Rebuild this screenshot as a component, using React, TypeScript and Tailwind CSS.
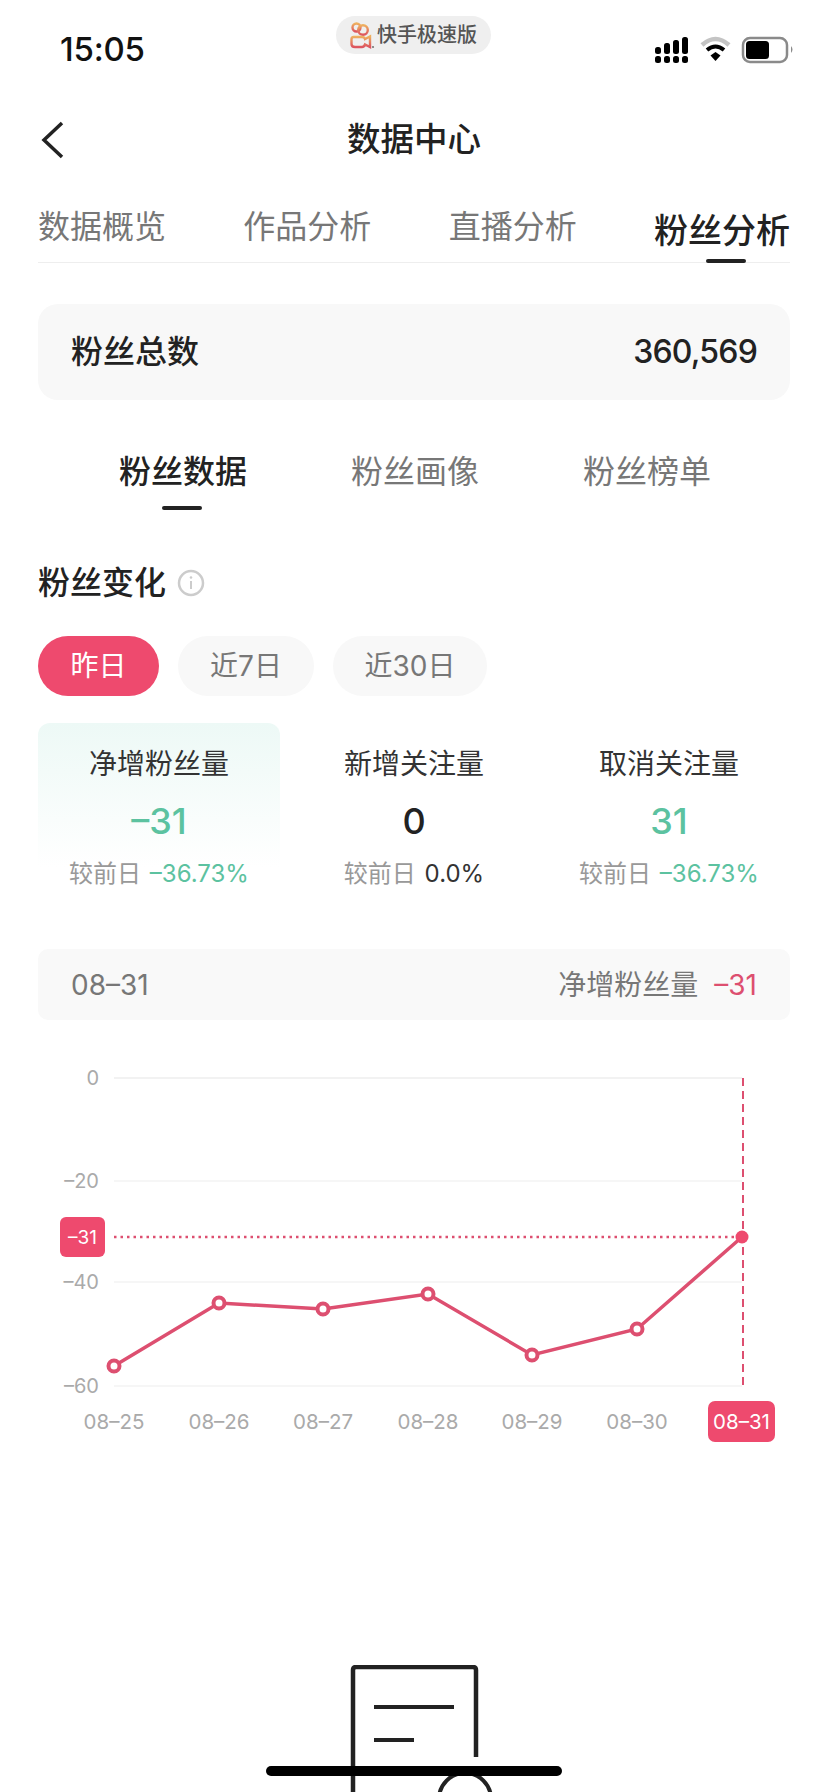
import React from 'react';

const fontStack = 'font-["Inter","Noto_Sans_CJK_SC",sans-serif]';

const points = [
  { x: 114, y: 1365, label: '08–25' },
  { x: 219, y: 1302, label: '08–26' },
  { x: 323, y: 1308, label: '08–27' },
  { x: 428, y: 1293, label: '08–28' },
  { x: 532, y: 1354, label: '08–29' },
  { x: 637, y: 1328, label: '08–30' },
  { x: 742, y: 1236, label: '08–31' },
];

const yTicks = [
  { y: 1077, label: '0' },
  { y: 1180, label: '–20' },
  { y: 1281, label: '–40' },
  { y: 1385, label: '–60' },
];

const metrics = [
  { label: '净增粉丝量', value: '–31', valueClass: 'text-[#5cc2a0]', rate: '–36.73%', rateClass: 'text-[#5cc2a0]', active: true },
  { label: '新增关注量', value: '0', valueClass: 'text-[#222]', rate: '0.0%', rateClass: 'text-[#333]', active: false },
  { label: '取消关注量', value: '31', valueClass: 'text-[#5cc2a0]', rate: '–36.73%', rateClass: 'text-[#5cc2a0]', active: false },
];

const StatusIcons = () => (
  <svg width="140" height="28" viewBox="655 36 140 28" className="block mt-[36px]">
    <g fill="#000">
      <rect x="655" y="47" width="6" height="7" rx="2.5" />
      <rect x="664" y="43" width="6" height="11" rx="2.5" />
      <rect x="673" y="40" width="6" height="14" rx="2.5" />
      <rect x="682" y="37" width="6" height="17" rx="2.5" />
      <rect x="655" y="56" width="6" height="7" rx="2.5" />
      <rect x="664" y="56" width="6" height="7" rx="2.5" />
      <rect x="673" y="56" width="6" height="7" rx="2.5" />
      <rect x="682" y="56" width="6" height="7" rx="2.5" />
    </g>
    <path d="M702 45 Q715.500 33 729 45" fill="none" stroke="#c4c4c4" strokeWidth="4.500" />
    <path d="M707 50 Q715.500 43 724 50" fill="none" stroke="#000" strokeWidth="4" />
    <path d="M710.500 55.500 L715.500 52 L720.500 55.500 L715.500 61 Z" fill="#000" />
    <rect x="743" y="38" width="44" height="24" rx="7" fill="none" stroke="#8a8a8a" strokeWidth="2.500" />
    <rect x="746" y="41" width="23" height="18" rx="3.500" fill="#000" />
    <path d="M791 46 Q794 49.500 791 53 Z" fill="#8a8a8a" />
  </svg>
);

const AppLogo = () => (
  <svg width="26" height="28" viewBox="0 0 26 28" className="block">
    <defs>
      <linearGradient id="logoFill" x1="0" y1="0" x2="0" y2="1">
        <stop offset="0" stopColor="#eeb060" />
        <stop offset="1" stopColor="#dd5560" />
      </linearGradient>
    </defs>
    <g fill="none" stroke="url(#logoFill)" strokeWidth="2.400">
      <circle cx="7.500" cy="6.500" r="4" />
      <circle cx="14" cy="9" r="4.800" />
      <path d="M4.500 16 L13 16 Q15.500 16 16 18 L21 15.500 L21 26 L16 23.500 Q15 26 13 26 L6 26 Q2.500 26 2.500 23 L2.500 18.500 Q2.500 16 4.500 16 Z" />
    </g>
    <circle cx="24" cy="26" r="1.100" fill="#777" />
  </svg>
);

const TrendChart = () => (
  <svg width="828" height="400" viewBox="0 1060 828 400" className="block mt-[41px]">
    {yTicks.map((t, i) => (
      <g key={t.label}>
        <line x1="114" x2="742" y1={t.y} y2={t.y} stroke={i === 0 ? '#eeeeee' : '#f3f3f3'} strokeWidth="1.500" />
        <text x="99" y={t.y + 7} textAnchor="end" fontSize="20" fill="#aaaaaa">
          {t.label}
        </text>
      </g>
    ))}
    <line x1="114" x2="742" y1="1236" y2="1236" stroke="#dd4f70" strokeWidth="2.500" strokeDasharray="2.500 4" />
    <line x1="743" x2="743" y1="1077" y2="1385" stroke="#dd4f70" strokeWidth="2" strokeDasharray="8 5" />
    <polyline
      points={points.map(p => `${p.x},${p.y}`).join(' ')}
      fill="none"
      stroke="#dd4f70"
      strokeWidth="3.500"
    />
    {points.slice(0, 6).map(p => (
      <circle key={p.x} cx={p.x} cy={p.y} r="5.500" fill="#fff" stroke="#dd4f70" strokeWidth="4" />
    ))}
    <circle cx="742" cy="1236" r="6.500" fill="#ee4a6e" />
    <rect x="60" y="1216" width="45" height="40" rx="6" fill="#ee4a6e" />
    <text x="82.500" y="1243" textAnchor="middle" fontSize="19" fill="#fff">–31</text>
    {points.slice(0, 6).map(p => (
      <text key={p.label} x={p.x} y="1428" textAnchor="middle" fontSize="20.500" fill="#aaaaaa">
        {p.label}
      </text>
    ))}
    <rect x="708" y="1400" width="67" height="41" rx="7" fill="#ee4a6e" />
    <text x="741.500" y="1428" textAnchor="middle" fontSize="20.500" fill="#fff">08–31</text>
  </svg>
);

const FooterIllustration = () => (
  <svg width="828" height="127" viewBox="0 1665 828 127" className="block mt-[204px]">
    <path d="M353 1792 V1670 Q353 1667 356 1667 H473 Q476 1667 476 1670 V1757" fill="none" stroke="#222" strokeWidth="4.500" />
    <line x1="374" x2="454" y1="1707" y2="1707" stroke="#222" strokeWidth="4" />
    <line x1="374" x2="414" y1="1740" y2="1740" stroke="#222" strokeWidth="4" />
    <circle cx="465" cy="1799" r="26" fill="none" stroke="#222" strokeWidth="4" />
  </svg>
);

export default function App() {
  return (
    <div className={`relative w-[828px] h-[1792px] overflow-hidden bg-white ${fontStack}`}>
      {/* Status bar */}
      <div className="flex justify-between h-[110px] pl-[60px] pr-[33px]">
        <span className="mt-[31px] text-[33px] leading-[36px] font-medium tracking-[-0.2px] text-[#111]">15:05</span>
        <StatusIcons />
      </div>
      <div className="absolute top-[16px] left-[336px] w-[155px] h-[38px] rounded-full bg-[#efefef] flex items-center pl-[13px] gap-[2px]">
        <AppLogo />
        <span className="text-[20px] leading-none font-medium text-[#555] whitespace-nowrap">快手极速版</span>
      </div>

      {/* Nav */}
      <div className="relative h-[60px] flex items-center justify-center">
        <svg width="24" height="38" viewBox="0 0 24 38" className="absolute left-[41px] top-[11px]">
          <path d="M21 2 L3 19 L21 36" fill="none" stroke="#222" strokeWidth="3.500" />
        </svg>
        <h1 className="text-[33.500px] leading-none font-medium text-[#222]">数据中心</h1>
      </div>

      {/* Top tabs */}
      <div className="relative mx-[38px] h-[93px] pt-[39px] border-b border-[#eeeeee] flex justify-between">
        <span className="text-[32px] leading-[36px] text-[#777]">数据概览</span>
        <span className="text-[32px] leading-[36px] text-[#777]">作品分析</span>
        <span className="text-[32px] leading-[36px] text-[#777]">直播分析</span>
        <span className="mt-[4px] text-[34px] leading-[36px] font-medium text-[#222]">粉丝分析</span>
        <div className="absolute right-[44px] bottom-[-1px] w-[40px] h-[4px] rounded-full bg-[#222]" />
      </div>

      {/* Total */}
      <div className="mx-[38px] mt-[41px] h-[96px] rounded-[20px] bg-[#f8f8f8] flex items-center justify-between px-[33px]">
        <span className="text-[32px] font-medium text-[#222]">粉丝总数</span>
        <span className="text-[32px] font-medium tracking-[-0.8px] text-[#222]">360,569</span>
      </div>

      {/* Sub tabs */}
      <div className="mt-[50px] flex justify-center gap-[106px]">
        <div className="relative w-[126px] h-[60px]">
          <span className="block text-[32px] leading-[44px] font-medium text-[#222] whitespace-nowrap">粉丝数据</span>
          <div className="absolute left-[43px] bottom-0 w-[40px] h-[4px] rounded-full bg-[#222]" />
        </div>
        <span className="w-[126px] text-[32px] leading-[44px] text-[#777] whitespace-nowrap">粉丝画像</span>
        <span className="w-[126px] text-[32px] leading-[44px] text-[#777] whitespace-nowrap">粉丝榜单</span>
      </div>

      {/* Section heading */}
      <div className="mt-[51px] mx-[38px] flex items-center gap-[11px] h-[44px]">
        <h2 className="text-[32px] leading-none font-medium text-[#222]">粉丝变化</h2>
        <svg width="28" height="28" viewBox="0 0 28 28">
          <circle cx="14" cy="14" r="12" fill="none" stroke="#cccccc" strokeWidth="2.500" />
          <line x1="14" x2="14" y1="12" y2="20" stroke="#cccccc" strokeWidth="2" />
          <circle cx="14" cy="8.500" r="1.300" fill="#cccccc" />
        </svg>
      </div>

      {/* Range pills */}
      <div className="mt-[31px] mx-[38px] flex gap-[19px]">
        <div className="w-[121px] h-[60px] rounded-full bg-[#ee4a6e] text-white text-[28px] flex items-center justify-center">昨日</div>
        <div className="w-[136px] h-[60px] rounded-full bg-[#f8f8f8] text-[#777] text-[28px] flex items-center justify-center">近7日</div>
        <div className="w-[154px] h-[60px] rounded-full bg-[#f8f8f8] text-[#777] text-[28px] flex items-center justify-center">近30日</div>
      </div>

      {/* Metrics */}
      <div className="mt-[27px] mx-[38px] grid grid-cols-3 gap-[13px]">
        {metrics.map(m => (
          <div
            key={m.label}
            className={`h-[192px] pt-[22px] flex flex-col items-center rounded-t-[12px] ${m.active ? 'bg-gradient-to-b from-[#edf9f6] to-white to-75%' : ''}`}
          >
            <span className="text-[28px] leading-[38px] text-[#333]">{m.label}</span>
            <span className={`mt-[18px] text-[36px] leading-[40px] font-medium ${m.valueClass}`}>{m.value}</span>
            <span className="mt-[17px] text-[24px] leading-[32px] text-[#999] whitespace-nowrap">
              较前日 <span className={`ml-[2px] ${m.rateClass}`}>{m.rate}</span>
            </span>
          </div>
        ))}
      </div>

      {/* Selected day */}
      <div className="mt-[34px] mx-[38px] h-[71px] rounded-[10px] bg-[#f9f9f9] flex items-center justify-between px-[33px] text-[28px] text-[#777]">
        <span>08–31</span>
        <span>
          净增粉丝量<span className="ml-[16px] text-[#dd4f70]">–31</span>
        </span>
      </div>

      <TrendChart />
      <FooterIllustration />

      {/* Home indicator */}
      <div className="absolute left-[266px] bottom-[16px] w-[296px] h-[10px] rounded-full bg-black" />
    </div>
  );
}
